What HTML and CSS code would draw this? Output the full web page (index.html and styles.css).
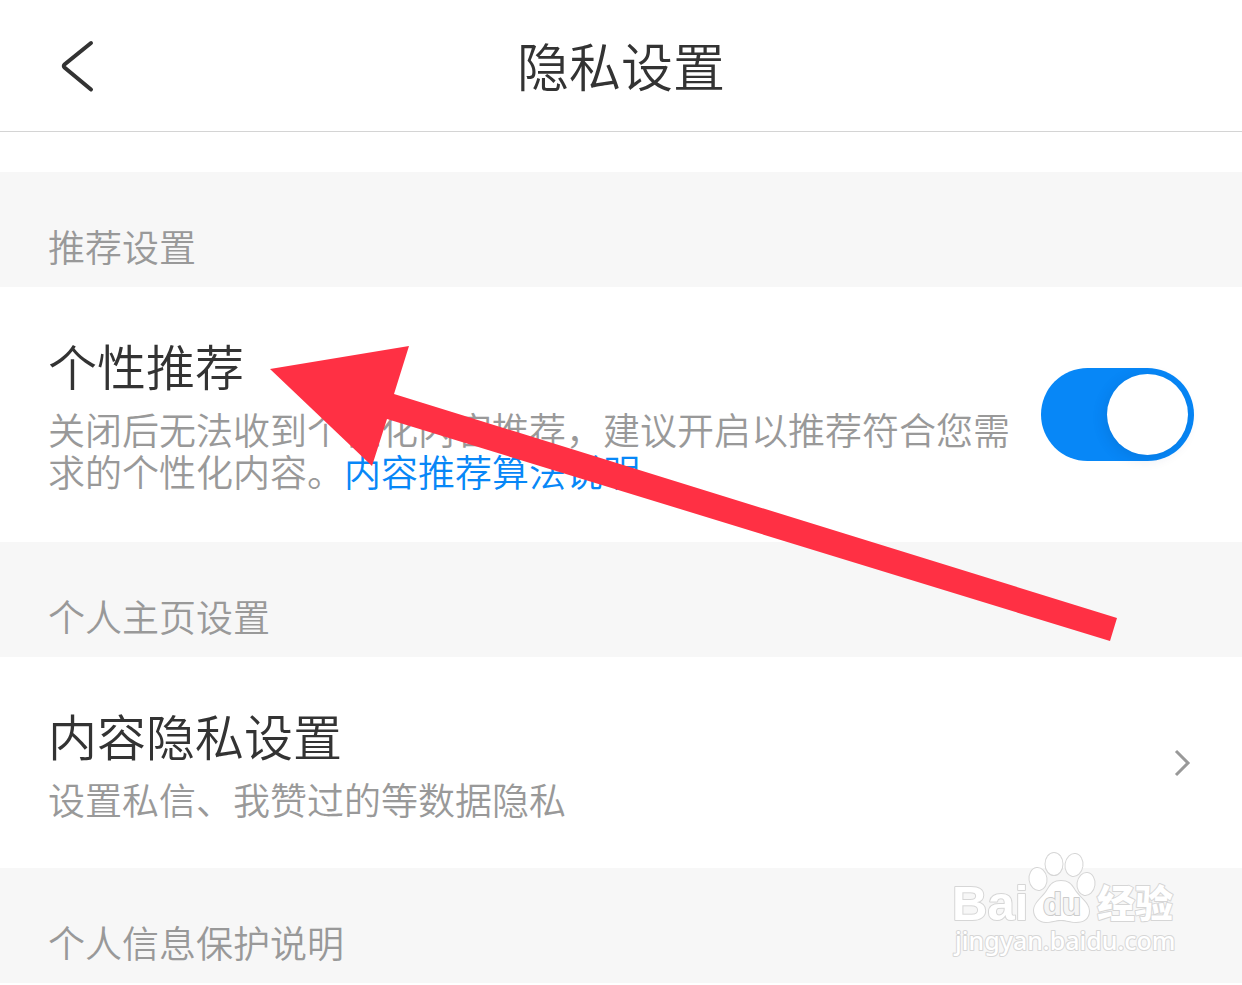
FILE: index.html
```html
<!DOCTYPE html>
<html lang="zh-CN">
<head>
<meta charset="utf-8">
<meta name="viewport" content="width=device-width, initial-scale=1">
<title>隐私设置</title>
<link rel="stylesheet" href="styles.css">
</head>
<body>
<div class="screen">
  <header class="topbar">
    <button class="back" type="button" aria-label="返回">
      <svg width="36" height="56" viewBox="0 0 36 56" aria-hidden="true"><path d="M31 5 L4.500 26.500 Q3 28 4.500 29.500 L31 51.500"/></svg>
    </button>
    <h1 class="title">隐私设置</h1>
  </header>
  <main class="settings">
    <h2 class="section">推荐设置</h2>
    <div class="row row-toggle">
      <div class="copy">
        <label class="name" for="personal">个性推荐</label>
        <p class="desc">关闭后无法收到个性化内容推荐，建议开启以推荐符合您需求的个性化内容。<a class="link" href="#algorithm">内容推荐算法说明</a></p>
      </div>
      <input class="switch" id="personal" type="checkbox" role="switch" checked>
    </div>
    <h2 class="section">个人主页设置</h2>
    <a class="row row-link" href="#content-privacy">
      <span class="copy">
        <span class="name">内容隐私设置</span>
        <span class="desc">设置私信、我赞过的等数据隐私</span>
      </span>
      <svg class="chevron" width="22" height="30" viewBox="0 0 22 30" aria-hidden="true"><path d="M4 3 L16 15 L4 27"/></svg>
    </a>
    <h2 class="section">个人信息保护说明</h2>
  </main>
  <svg class="arrow" width="848" height="296" viewBox="0 0 848 296" aria-hidden="true"><path d="M0 23 L139 0 L124 48 L847 272 L840 295 L117 73 L102 120 Z"/></svg>
  <svg class="watermark" width="230" height="116" viewBox="0 0 230 116" role="img" aria-label="Baidu 经验">
    <g class="mark">
      <text class="mark-latin" x="2" y="72">Bai</text>
      <ellipse cx="88" cy="31" rx="8.500" ry="11" transform="rotate(-8 88 31)"/>
      <ellipse cx="104" cy="16" rx="8.500" ry="11"/>
      <ellipse cx="124" cy="17" rx="8.500" ry="11" transform="rotate(8 124 17)"/>
      <ellipse cx="136" cy="36" rx="8.500" ry="11" transform="rotate(8 136 36)"/>
      <path d="M111 33 C118 33 121 36 124 41 C128 49 139 54 139 63 C139 71 133 74 126 74 C120 74 117 72 111 72 C105 72 102 74 96 74 C89 74 84 69 84 62 C84 54 94 49 98 41 C101 36 104 33 111 33 Z"/>
      <text class="mark-du" x="93" y="67">du</text>
      <text class="mark-cjk" x="147" y="69">经验</text>
      <text class="mark-url" x="5" y="102">jingyan.baidu.com</text>
    </g>
  </svg>
</div>
</body>
</html>
```
FILE: styles.css
```css
* {
  box-sizing: border-box;
}

body {
  margin: 0;
  background: #fff;
  color: #333;
  font-family: "Noto Sans CJK SC", sans-serif;
  font-weight: 350;
}

.screen {
  position: relative;
}

.topbar {
  display: grid;
  grid-template-columns: 120px 1fr 120px;
  align-items: center;
  height: 132px;
  border-bottom: 1px solid #d4d4d4;
}

.back {
  display: flex;
  padding: 0 0 0 60px;
  border: 0;
  background: none;
}

.back path {
  fill: none;
  stroke: #333;
  stroke-width: 4;
  stroke-linecap: round;
}

.title {
  margin: 0;
  padding-bottom: 2px;
  font-size: 52px;
  line-height: 60px;
  font-weight: inherit;
  text-align: center;
}

.settings {
  padding-top: 40px;
}

.section {
  margin: 0;
  padding: 52px 48px 19px;
  background: #f7f7f7;
  color: #999;
  font-size: 37px;
  line-height: 44px;
  font-weight: inherit;
}

.row {
  display: flex;
  align-items: center;
  gap: 24px;
  padding: 0 48px;
  color: #333;
  text-decoration: none;
}

.copy {
  display: flex;
  flex: 1;
  flex-direction: column;
  gap: 12px;
  padding: 47px 0 48px;
}

.row-toggle .copy {
  padding-bottom: 50px;
}

.name {
  font-size: 49px;
  line-height: 62px;
}

.desc {
  margin: 0;
  color: #999;
  font-size: 37px;
  line-height: 42px;
}

.link {
  color: #0787f7;
  text-decoration: none;
}

.switch {
  flex: none;
  display: flex;
  align-items: center;
  justify-content: flex-end;
  width: 153px;
  height: 93px;
  margin: 0;
  padding: 6px;
  border-radius: 47px;
  background: #ccc;
  appearance: none;
}

.switch::before {
  content: "";
  width: 81px;
  height: 81px;
  border-radius: 50%;
  background: #fff;
  box-shadow: -2px 3px 14px rgba(0, 40, 100, 0.14);
}

.switch:checked {
  background: #0787f7;
}

.switch:not(:checked) {
  justify-content: flex-start;
}

.chevron {
  flex: none;
}

.chevron path {
  fill: none;
  stroke: #999;
  stroke-width: 3;
}

.arrow {
  position: absolute;
  top: 346px;
  left: 270px;
  fill: #ff3044;
  pointer-events: none;
}

.watermark {
  position: absolute;
  top: 848px;
  right: 62px;
  pointer-events: none;
}

.mark {
  fill: #fff;
  stroke: #d6d6d6;
  stroke-width: 2;
  stroke-linejoin: round;
  paint-order: stroke;
}

.mark-latin {
  font: 700 49px "Liberation Sans", sans-serif;
}

.mark-du {
  font: 700 31px "Liberation Sans", sans-serif;
  fill: #f5f5f5;
  stroke: #ccc;
}

.mark-cjk {
  font: 900 38px "Noto Sans CJK SC", sans-serif;
}

.mark-url {
  font: 500 25px "Noto Sans", sans-serif;
}
```
